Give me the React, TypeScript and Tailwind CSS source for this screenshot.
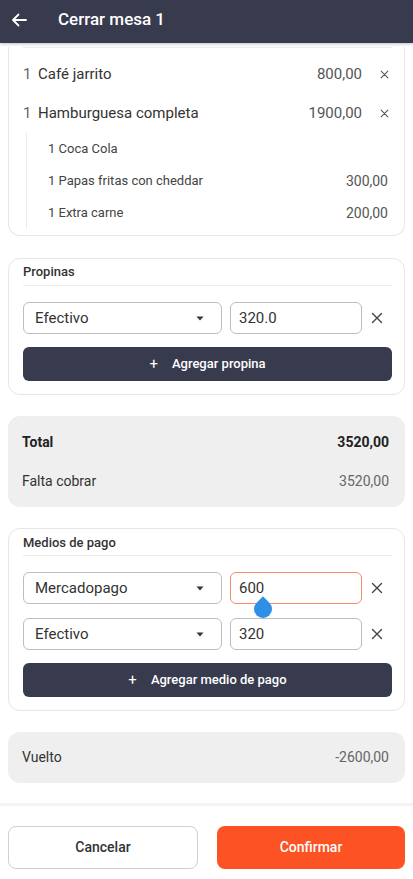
import React from "react";

const font = { fontFamily: "Roboto, 'Noto Sans', Arial, sans-serif" };

function XIcon({ size = 12, className = "" }: { size?: number; className?: string }) {
  return (
    <svg width={size} height={size} viewBox="0 0 12 12" className={className}>
      <path d="M1.5 1.5 L10.5 10.5 M10.5 1.5 L1.5 10.5" stroke="currentColor" strokeWidth="1.4" strokeLinecap="round" />
    </svg>
  );
}

function Caret() {
  return (
    <svg width="8" height="5" viewBox="0 0 8 5">
      <path d="M0.5 0.5 H7.5 L4 4.5 Z" fill="#333" />
    </svg>
  );
}

function ItemRow({ qty, name, price }: { qty: string; name: string; price: string }) {
  return (
    <div className="h-[39px] flex items-center text-[15px]">
      <span className="text-[#666] w-[15px]">{qty}</span>
      <span className="text-[#333] flex-1">{name}</span>
      <span className="text-[#555]">{price}</span>
      <span className="w-[30px] flex justify-end pr-[3px] text-[#555]">
        <XIcon size={9} />
      </span>
    </div>
  );
}

function SubRow({ name, price }: { name: string; price?: string }) {
  return (
    <div className="h-8 flex items-center text-[13px] pr-[4px]">
      <span className="text-[#444] flex-1">{name}</span>
      {price && <span className="text-[#555] text-[14px]">{price}</span>}
    </div>
  );
}

function PayRow({ method, amount, focused }: { method: string; amount: string; focused?: boolean }) {
  return (
    <div className="flex items-center h-8">
      <div className="w-[199px] h-full mr-2 border border-[#bdbdbd] rounded-[6px] flex items-center justify-between pl-[11px] pr-[17px]">
        <span className="text-[15px] text-[#333]">{method}</span>
        <Caret />
      </div>
      <div
        className={
          "relative w-[132px] h-full rounded-[6px] border flex items-center pl-[8px] " +
          (focused ? "border-[#ef8e70]" : "border-[#bdbdbd]")
        }
      >
        <span className="text-[15px] text-[#333]">{amount}</span>
        {focused && (
          <div className="absolute left-[23px] top-[27px] w-[18px] h-[18px] rounded-full rounded-tl-none rotate-45 bg-[#2f8fe6]" />
        )}
      </div>
      <div className="flex-1 flex justify-center text-[#444]">
        <XIcon size={12} />
      </div>
    </div>
  );
}

function DarkButton({ label }: { label: string }) {
  return (
    <div className="h-[34px] rounded-[6px] bg-[#383a4e] flex items-center justify-center gap-[14px] text-white text-[13px] font-medium">
      <span className="text-[15px] font-normal">+</span>
      <span>{label}</span>
    </div>
  );
}

export default function App() {
  return (
    <div style={font} className="w-[413px] h-[879px] flex flex-col bg-white overflow-hidden">
      {/* Header */}
      <div className="h-[43px] shrink-0 bg-[#383a4e] flex items-center pb-[4px] shadow-[0_1px_3px_rgba(0,0,0,0.25)] relative z-10">
        <svg width="16" height="14" viewBox="0 0 16 14" className="ml-[11px]">
          <path d="M15 7 H2 M7.5 1.5 L2 7 L7.5 12.5" stroke="white" strokeWidth="1.8" fill="none" strokeLinecap="round" strokeLinejoin="round" />
        </svg>
        <span className="ml-[31px] text-white text-[17px] font-medium">Cerrar mesa 1</span>
      </div>

      {/* Scroll body */}
      <div className="flex-1 overflow-hidden">
        {/* Items card (scrolled) */}
        <div className="mx-2 border border-t-0 border-[#e6e6e6] rounded-b-[12px] pl-[14px] pr-[12px] pb-[6px]">
          <div className="mt-1 border-b border-[#ececec]" />
          <div className="mt-[7px]">
            <ItemRow qty="1" name="Café jarrito" price="800,00" />
            <ItemRow qty="1" name="Hamburguesa completa" price="1900,00" />
            <div className="ml-[3px] border-l border-[#ececec] pl-[21px]">
              <SubRow name="1 Coca Cola" />
              <SubRow name="1 Papas fritas con cheddar" price="300,00" />
              <SubRow name="1 Extra carne" price="200,00" />
            </div>
          </div>
        </div>

        {/* Propinas */}
        <div className="mx-2 mt-[22px] border border-[#e6e6e6] rounded-[12px] pl-[14px] pr-[12px] pt-[5px] pb-[13px]">
          <div className="text-[13px] font-medium text-[#333] leading-[16px] pb-[5px] border-b border-[#ececec]">
            Propinas
          </div>
          <div className="mt-4">
            <PayRow method="Efectivo" amount="320.0" />
          </div>
          <div className="mt-[13px]">
            <DarkButton label="Agregar propina" />
          </div>
        </div>

        {/* Totals */}
        <div className="mx-2 mt-[21px] bg-[#efefef] rounded-[12px] pl-[14px] pr-[16px] pt-[7px] pb-[6px] text-[14px]">
          <div className="h-[39px] flex items-center justify-between font-bold text-[#222]">
            <span>Total</span>
            <span>3520,00</span>
          </div>
          <div className="h-[39px] flex items-center justify-between">
            <span className="text-[#333]">Falta cobrar</span>
            <span className="text-[#666]">3520,00</span>
          </div>
        </div>

        {/* Medios de pago */}
        <div className="mx-2 mt-[21px] border border-[#e6e6e6] rounded-[12px] pl-[14px] pr-[12px] pt-[6px] pb-[13px]">
          <div className="text-[13px] font-medium text-[#333] leading-[16px] pb-[4px] border-b border-[#ececec]">
            Medios de pago
          </div>
          <div className="mt-4 flex flex-col gap-[14px]">
            <PayRow method="Mercadopago" amount="600" focused />
            <PayRow method="Efectivo" amount="320" />
          </div>
          <div className="mt-[13px]">
            <DarkButton label="Agregar medio de pago" />
          </div>
        </div>

        {/* Vuelto */}
        <div className="mx-2 mt-[21px] h-[51px] bg-[#efefef] rounded-[12px] pl-[14px] pr-[16px] flex items-center justify-between text-[14px]">
          <span className="text-[#333]">Vuelto</span>
          <span className="text-[#666]">-2600,00</span>
        </div>
      </div>

      {/* Footer */}
      <div className="shrink-0">
        <div className="h-[3px] bg-[#f4f4f4]" />
        <div className="px-2 pt-5 pb-[10px] flex gap-[19px]">
          <div className="w-[190px] h-[43px] border border-[#cfcfcf] rounded-[8px] flex items-center justify-center text-[14px] font-medium text-[#333]">
            Cancelar
          </div>
          <div className="flex-1 h-[43px] bg-[#fd5223] rounded-[8px] flex items-center justify-center text-[14px] font-medium text-white">
            Confirmar
          </div>
        </div>
      </div>
    </div>
  );
}
